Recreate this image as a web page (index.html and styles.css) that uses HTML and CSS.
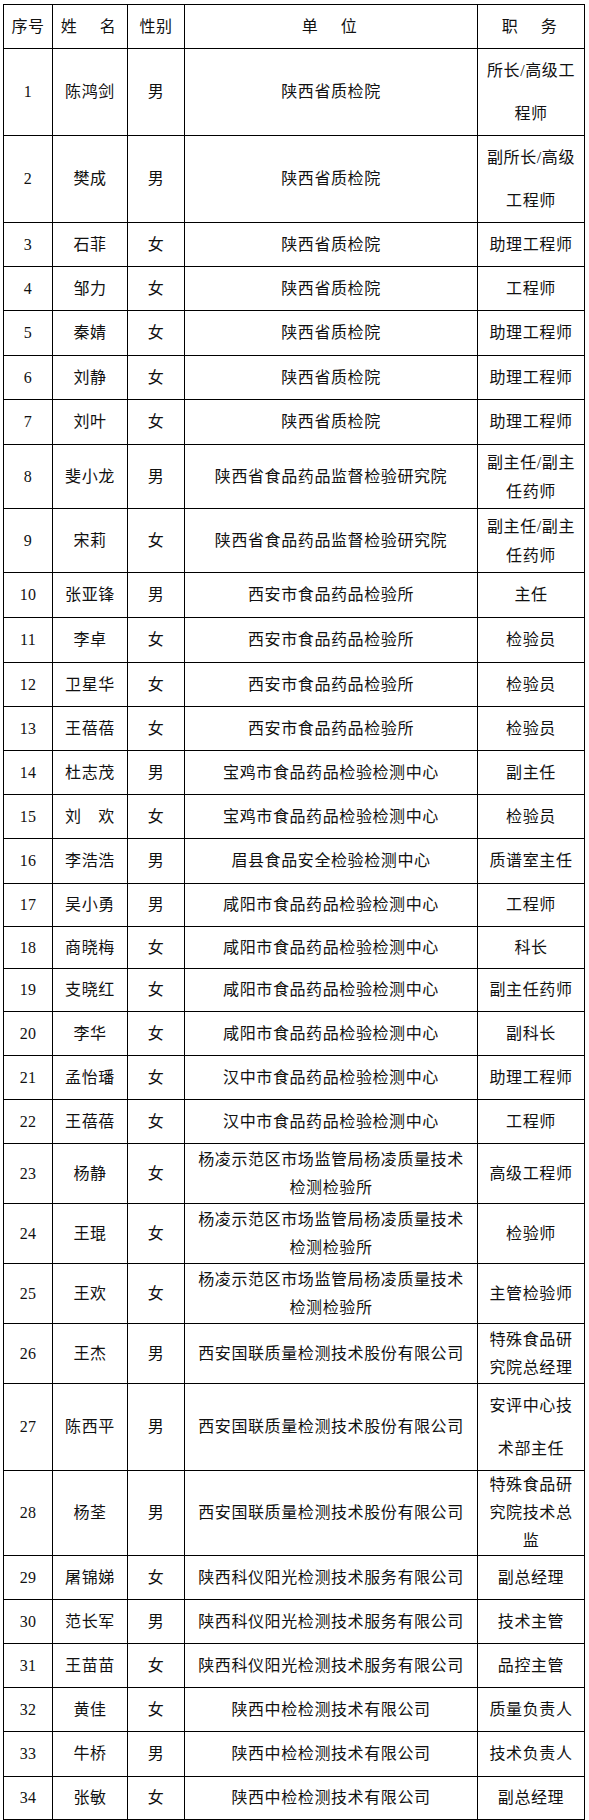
FILE: index.html
```html
<!DOCTYPE html>
<html lang="zh-CN">
<head>
<meta charset="utf-8">
<title>名单</title>
<link rel="stylesheet" href="styles.css">
</head>
<body>
<table class="roster">
  <colgroup>
    <col class="c-no">
    <col class="c-name">
    <col class="c-sex">
    <col class="c-unit">
    <col class="c-job">
  </colgroup>
  <tr class="h44">
    <td>序号</td><td class="spread">姓　名</td><td>性别</td><td class="spread">单　位</td><td class="spread">职　务</td>
  </tr>
  <tr class="h86"><td class="num">1</td><td>陈鸿剑</td><td>男</td><td>陕西省质检院</td><td class="lh43">所长/高级工<br>程师</td></tr>
  <tr class="h87"><td class="num">2</td><td>樊成</td><td>男</td><td>陕西省质检院</td><td class="lh43">副所长/高级<br>工程师</td></tr>
  <tr class="h44"><td class="num">3</td><td>石菲</td><td>女</td><td>陕西省质检院</td><td>助理工程师</td></tr>
  <tr class="h44"><td class="num">4</td><td>邹力</td><td>女</td><td>陕西省质检院</td><td>工程师</td></tr>
  <tr class="h45"><td class="num">5</td><td>秦婧</td><td>女</td><td>陕西省质检院</td><td>助理工程师</td></tr>
  <tr class="h44"><td class="num">6</td><td>刘静</td><td>女</td><td>陕西省质检院</td><td>助理工程师</td></tr>
  <tr class="h45"><td class="num">7</td><td>刘叶</td><td>女</td><td>陕西省质检院</td><td>助理工程师</td></tr>
  <tr class="h64"><td class="num">8</td><td>斐小龙</td><td>男</td><td>陕西省食品药品监督检验研究院</td><td class="lh29">副主任/副主<br>任药师</td></tr>
  <tr class="h64"><td class="num">9</td><td>宋莉</td><td>女</td><td>陕西省食品药品监督检验研究院</td><td class="lh29">副主任/副主<br>任药师</td></tr>
  <tr class="h45"><td class="num">10</td><td>张亚锋</td><td>男</td><td>西安市食品药品检验所</td><td>主任</td></tr>
  <tr class="h45"><td class="num">11</td><td>李卓</td><td>女</td><td>西安市食品药品检验所</td><td>检验员</td></tr>
  <tr class="h44"><td class="num">12</td><td>卫星华</td><td>女</td><td>西安市食品药品检验所</td><td>检验员</td></tr>
  <tr class="h44"><td class="num">13</td><td>王蓓蓓</td><td>女</td><td>西安市食品药品检验所</td><td>检验员</td></tr>
  <tr class="h44"><td class="num">14</td><td>杜志茂</td><td>男</td><td>宝鸡市食品药品检验检测中心</td><td>副主任</td></tr>
  <tr class="h44"><td class="num">15</td><td>刘　欢</td><td>女</td><td>宝鸡市食品药品检验检测中心</td><td>检验员</td></tr>
  <tr class="h45"><td class="num">16</td><td>李浩浩</td><td>男</td><td>眉县食品安全检验检测中心</td><td>质谱室主任</td></tr>
  <tr class="h43"><td class="num">17</td><td>吴小勇</td><td>男</td><td>咸阳市食品药品检验检测中心</td><td>工程师</td></tr>
  <tr class="h42"><td class="num">18</td><td>商晓梅</td><td>女</td><td>咸阳市食品药品检验检测中心</td><td>科长</td></tr>
  <tr class="h43"><td class="num">19</td><td>支晓红</td><td>女</td><td>咸阳市食品药品检验检测中心</td><td>副主任药师</td></tr>
  <tr class="h44"><td class="num">20</td><td>李华</td><td>女</td><td>咸阳市食品药品检验检测中心</td><td>副科长</td></tr>
  <tr class="h44"><td class="num">21</td><td>孟怡璠</td><td>女</td><td>汉中市食品药品检验检测中心</td><td>助理工程师</td></tr>
  <tr class="h44"><td class="num">22</td><td>王蓓蓓</td><td>女</td><td>汉中市食品药品检验检测中心</td><td>工程师</td></tr>
  <tr class="h60"><td class="num">23</td><td>杨静</td><td>女</td><td class="lh28">杨凌示范区市场监管局杨凌质量技术<br>检测检验所</td><td>高级工程师</td></tr>
  <tr class="h60"><td class="num">24</td><td>王琨</td><td>女</td><td class="lh28">杨凌示范区市场监管局杨凌质量技术<br>检测检验所</td><td>检验师</td></tr>
  <tr class="h60"><td class="num">25</td><td>王欢</td><td>女</td><td class="lh28">杨凌示范区市场监管局杨凌质量技术<br>检测检验所</td><td>主管检验师</td></tr>
  <tr class="h60"><td class="num">26</td><td>王杰</td><td>男</td><td>西安国联质量检测技术股份有限公司</td><td class="lh28">特殊食品研<br>究院总经理</td></tr>
  <tr class="h86"><td class="num">27</td><td>陈西平</td><td>男</td><td>西安国联质量检测技术股份有限公司</td><td class="lh43">安评中心技<br>术部主任</td></tr>
  <tr class="h84"><td class="num">28</td><td>杨荃</td><td>男</td><td>西安国联质量检测技术股份有限公司</td><td class="lh28">特殊食品研<br>究院技术总<br>监</td></tr>
  <tr class="h44"><td class="num">29</td><td>屠锦娣</td><td>女</td><td>陕西科仪阳光检测技术服务有限公司</td><td>副总经理</td></tr>
  <tr class="h44"><td class="num">30</td><td>范长军</td><td>男</td><td>陕西科仪阳光检测技术服务有限公司</td><td>技术主管</td></tr>
  <tr class="h44"><td class="num">31</td><td>王苗苗</td><td>女</td><td>陕西科仪阳光检测技术服务有限公司</td><td>品控主管</td></tr>
  <tr class="h44"><td class="num">32</td><td>黄佳</td><td>女</td><td>陕西中检检测技术有限公司</td><td>质量负责人</td></tr>
  <tr class="h45"><td class="num">33</td><td>牛桥</td><td>男</td><td>陕西中检检测技术有限公司</td><td>技术负责人</td></tr>
  <tr class="h43"><td class="num">34</td><td>张敏</td><td>女</td><td>陕西中检检测技术有限公司</td><td>副总经理</td></tr>
</table>
</body>
</html>
```

FILE: styles.css
```css
html, body {
  margin: 0;
  padding: 0;
  background: #fff;
}

.roster {
  margin: 4px 0 0 3px;
  width: 582px;
  table-layout: fixed;
  border-collapse: collapse;
  font-family: "Liberation Serif", "Noto Sans CJK SC", serif;
  font-size: 16px;
  color: #111;
}

.c-no { width: 49px; }
.c-name { width: 75px; }
.c-sex { width: 57px; }
.c-unit { width: 293px; }
.c-job { width: 107px; }

.roster td {
  border: 1px solid #000;
  padding: 0 2px;
  text-align: center;
  vertical-align: middle;
  letter-spacing: 0.6px;
  line-height: 20px;
  white-space: nowrap;
}

.roster td.num {
  letter-spacing: 0.3px;
}

.roster td.spread {
  letter-spacing: 3.5px;
}

.roster td.lh43 { line-height: 43px; }
.roster td.lh29 { line-height: 29px; }
.roster td.lh28 { line-height: 28px; }

.h42 { height: 42px; }
.h43 { height: 43px; }
.h44 { height: 44px; }
.h45 { height: 45px; }
.h60 { height: 60px; }
.h64 { height: 64px; }
.h84 { height: 84px; }
.h86 { height: 86px; }
.h87 { height: 87px; }
```
